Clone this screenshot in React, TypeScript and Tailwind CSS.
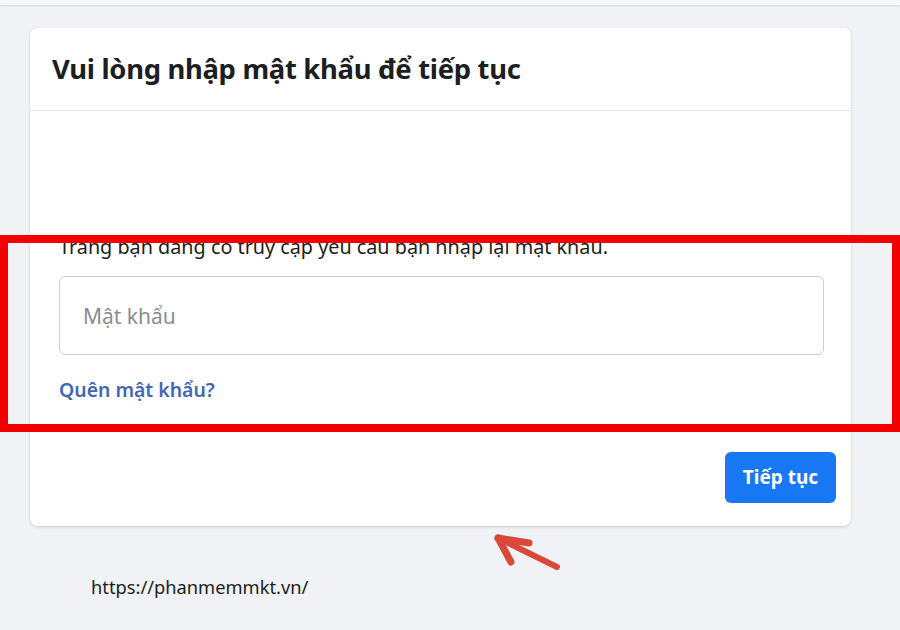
import { useState } from "react";

function RedArrow() {
  return (
    <svg
      className="absolute left-[490px] top-[530px]"
      width="76"
      height="46"
      viewBox="0 0 76 46"
      fill="none"
    >
      <g stroke="#d9483b" strokeLinecap="round" strokeLinejoin="round">
        <path d="M67 37 L10 9" strokeWidth="6" />
        <path d="M8 8 L39 13" strokeWidth="7" />
        <path d="M8 8 L21 32" strokeWidth="7" />
      </g>
    </svg>
  );
}

export default function App() {
  const [password, setPassword] = useState("");

  return (
    <div
      className="relative w-[900px] h-[630px] overflow-hidden bg-[#f0f2f5]"
      style={{ fontFamily: `"Noto Sans", "Open Sans", Arial, sans-serif` }}
    >
      <div className="h-[5px] bg-[#f7f8fa] shadow-[0_1px_2px_rgba(0,0,0,0.12)]" />

      <div className="ml-[30px] mt-[23px] w-[821px] rounded-lg bg-white shadow-[0_1px_3px_rgba(0,0,0,0.15)]">
        <div className="h-[83px] flex items-center px-[22px] border-b border-[#e4e6eb]">
          <h2 className="text-[27.4px] font-bold text-[#1c1e21] tracking-[-0.3px]">
            Vui lòng nhập mật khẩu để tiếp tục
          </h2>
        </div>

        <div className="px-[29px] pt-[124px] pb-[23px]">
          <p className="text-[19.8px] leading-[24px] text-[#1c1e21]">
            Trang bạn đang cố truy cập yêu cầu bạn nhập lại mật khẩu.
          </p>
          <input
            type="password"
            value={password}
            onChange={(e) => setPassword(e.target.value)}
            placeholder="Mật khẩu"
            className="mt-[17px] block w-[765px] h-[79px] rounded-md border border-[#ccd0d5] px-[23px] text-[21px] text-[#1c1e21] placeholder:text-[#8a8d91] outline-none"
          />
          <a
            href="#"
            className="mt-[23px] inline-block text-[19.4px] leading-[24px] font-semibold text-[#4267b2]"
          >
            Quên mật khẩu?
          </a>
          <div className="mt-[49px] flex justify-end -mr-[14px]">
            <button className="w-[111px] h-[51px] rounded-md bg-[#1877f2] text-white text-[19px] font-bold">
              Tiếp tục
            </button>
          </div>
        </div>
      </div>

      <p className="ml-[91px] mt-[47px] text-[18.3px] text-[#1c1e21]">
        https://phanmemmkt.vn/
      </p>

      {/* highlight box drawn over the form */}
      <div className="absolute left-0 top-[235px] w-[900px] h-[197px] border-[8px] border-[#f20000] pointer-events-none" />
      <RedArrow />
    </div>
  );
}
